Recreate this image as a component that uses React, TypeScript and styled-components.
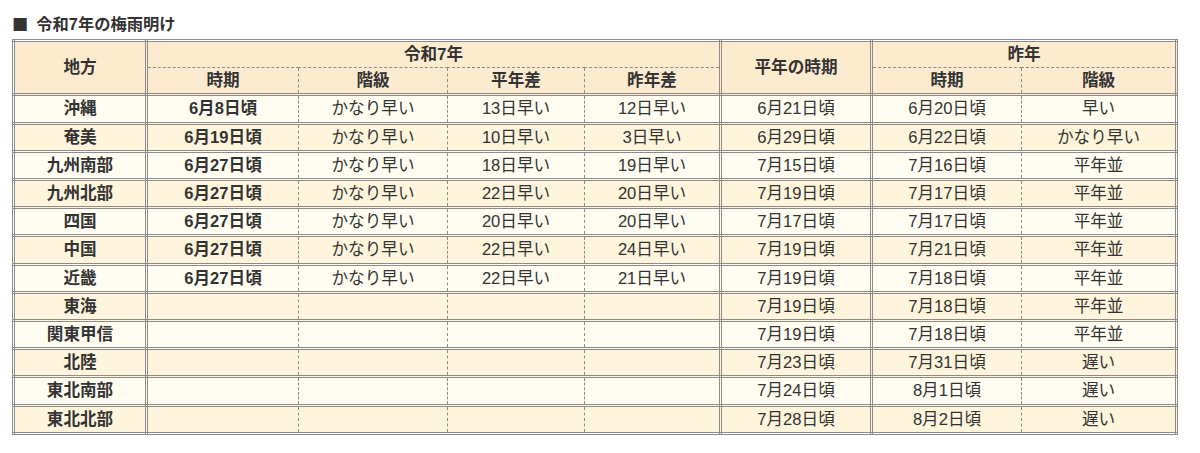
import styled, { createGlobalStyle, css } from 'styled-components';

const GlobalStyle = createGlobalStyle`
  body {
    margin: 0;
    background: #fff;
    color: #333;
    font-family: "Liberation Sans", "Noto Sans CJK JP", sans-serif;
  }
`;

const Page = styled.div`
  padding: 12px 12px 0 12px;
`;

const Title = styled.h2`
  margin: 0 0 3px;
  font-size: 16.3px;
  line-height: 23px;
  font-weight: bold;
  color: #333;
`;

const Mark = styled.span`
  display: inline-block;
  margin-right: 8px;
  font-family: "Noto Sans CJK JP", sans-serif;
  font-weight: normal;
`;

const Table = styled.table`
  width: 1163px;
  border-collapse: collapse;
  table-layout: fixed;
  font-size: 16.6px;
  border: 3px double #8c8c8c;
`;

const Row = styled.tr<{ $alt?: boolean }>`
  background: ${(p) => (p.$alt ? '#fef5dc' : '#fffdf1')};
`;

const HeadRow = styled.tr`
  background: #fdebd0;
`;

type EdgeProps = {
  $dashL?: boolean;
  $dashR?: boolean;
  $dashT?: boolean;
  $dashB?: boolean;
  $bold?: boolean;
};

const edges = css<EdgeProps>`
  border: 3px double #8c8c8c;
  ${(p) => p.$dashL && css`border-left: 1px dashed #8c8c8c;`}
  ${(p) => p.$dashR && css`border-right: 1px dashed #8c8c8c;`}
  ${(p) => p.$dashT && css`border-top: 1px dashed #8c8c8c;`}
  ${(p) => p.$dashB && css`border-bottom: 1px dashed #8c8c8c;`}
  padding: 2px 4px;
  line-height: 21.2px;
  text-align: center;
  vertical-align: middle;
  white-space: nowrap;
`;

const HeadCell = styled.th<EdgeProps>`
  ${edges}
  font-weight: bold;
  color: #333;
`;

const Cell = styled.td<EdgeProps>`
  ${edges}
  font-weight: ${(p) => (p.$bold ? 'bold' : 'normal')};
  color: #333;
`;

type Entry = {
  region: string;
  thisYear?: [string, string, string, string];
  normal: string;
  lastYear: [string, string];
};

const rows: Entry[] = [
  { region: '沖縄', thisYear: ['6月8日頃', 'かなり早い', '13日早い', '12日早い'], normal: '6月21日頃', lastYear: ['6月20日頃', '早い'] },
  { region: '奄美', thisYear: ['6月19日頃', 'かなり早い', '10日早い', '3日早い'], normal: '6月29日頃', lastYear: ['6月22日頃', 'かなり早い'] },
  { region: '九州南部', thisYear: ['6月27日頃', 'かなり早い', '18日早い', '19日早い'], normal: '7月15日頃', lastYear: ['7月16日頃', '平年並'] },
  { region: '九州北部', thisYear: ['6月27日頃', 'かなり早い', '22日早い', '20日早い'], normal: '7月19日頃', lastYear: ['7月17日頃', '平年並'] },
  { region: '四国', thisYear: ['6月27日頃', 'かなり早い', '20日早い', '20日早い'], normal: '7月17日頃', lastYear: ['7月17日頃', '平年並'] },
  { region: '中国', thisYear: ['6月27日頃', 'かなり早い', '22日早い', '24日早い'], normal: '7月19日頃', lastYear: ['7月21日頃', '平年並'] },
  { region: '近畿', thisYear: ['6月27日頃', 'かなり早い', '22日早い', '21日早い'], normal: '7月19日頃', lastYear: ['7月18日頃', '平年並'] },
  { region: '東海', normal: '7月19日頃', lastYear: ['7月18日頃', '平年並'] },
  { region: '関東甲信', normal: '7月19日頃', lastYear: ['7月18日頃', '平年並'] },
  { region: '北陸', normal: '7月23日頃', lastYear: ['7月31日頃', '遅い'] },
  { region: '東北南部', normal: '7月24日頃', lastYear: ['8月1日頃', '遅い'] },
  { region: '東北北部', normal: '7月28日頃', lastYear: ['8月2日頃', '遅い'] },
];

const colWidths = [133, 152, 149, 137, 136, 151, 150, 155];

export default function App() {
  return (
    <>
      <GlobalStyle />
      <Page>
        <Title>
          <Mark>■</Mark>令和7年の梅雨明け
        </Title>
        <Table>
          <colgroup>
            {colWidths.map((w, i) => (
              <col key={i} style={{ width: w }} />
            ))}
          </colgroup>
          <thead>
            <HeadRow>
              <HeadCell rowSpan={2}>地方</HeadCell>
              <HeadCell colSpan={4} $dashB>
                令和7年
              </HeadCell>
              <HeadCell rowSpan={2}>平年の時期</HeadCell>
              <HeadCell colSpan={2} $dashB>
                昨年
              </HeadCell>
            </HeadRow>
            <HeadRow>
              <HeadCell $dashT $dashR>時期</HeadCell>
              <HeadCell $dashT $dashL $dashR>階級</HeadCell>
              <HeadCell $dashT $dashL $dashR>平年差</HeadCell>
              <HeadCell $dashT $dashL>昨年差</HeadCell>
              <HeadCell $dashT $dashR>時期</HeadCell>
              <HeadCell $dashT $dashL>階級</HeadCell>
            </HeadRow>
          </thead>
          <tbody>
            {rows.map((r, i) => {
              const t = r.thisYear ?? ['', '', '', ''];
              return (
                <Row key={r.region} $alt={i % 2 === 1}>
                  <Cell $bold>{r.region}</Cell>
                  <Cell $bold $dashR>{t[0]}</Cell>
                  <Cell $dashL $dashR>{t[1]}</Cell>
                  <Cell $dashL $dashR>{t[2]}</Cell>
                  <Cell $dashL>{t[3]}</Cell>
                  <Cell>{r.normal}</Cell>
                  <Cell $dashR>{r.lastYear[0]}</Cell>
                  <Cell $dashL>{r.lastYear[1]}</Cell>
                </Row>
              );
            })}
          </tbody>
        </Table>
      </Page>
    </>
  );
}
